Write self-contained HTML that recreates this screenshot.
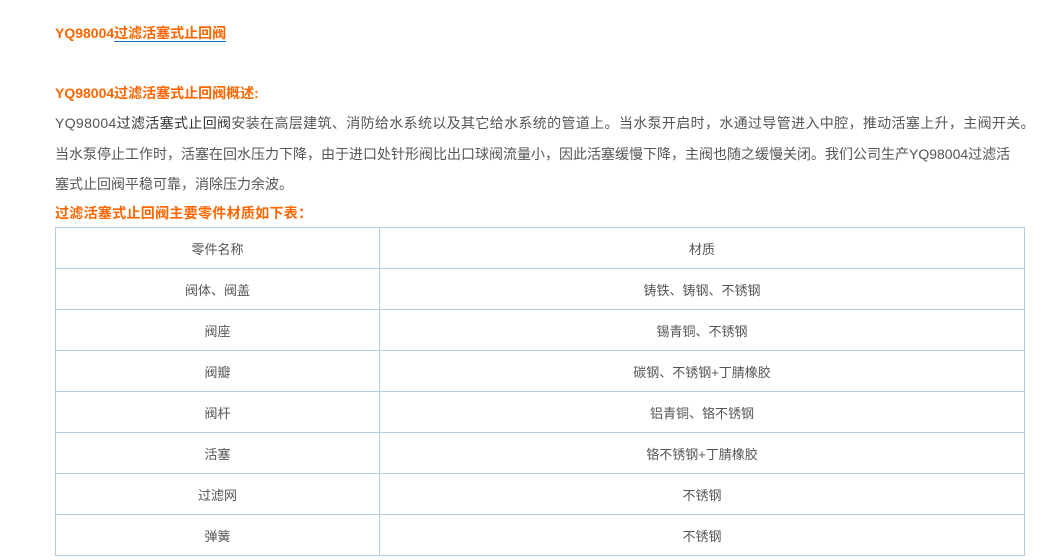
<!DOCTYPE html>
<html><head><meta charset="utf-8"><style>
body{margin:0;background:#fff;width:1042px;height:560px;overflow:hidden;font-family:"Liberation Sans","Noto Sans CJK SC",sans-serif;font-size:14px;color:#555;}
.t{position:absolute;left:55px;white-space:nowrap;}
.o{color:#ff6600;font-weight:bold;}
a{color:#ff6600;text-decoration:none;border-bottom:1px solid #1a6fc0;}
table{position:absolute;left:55px;top:227px;width:970px;border-collapse:collapse;}
td{border:1px solid #b5cde0;height:40px;text-align:center;font-size:13px;color:#555;padding:0;}
</style></head><body>
<div class="t o" style="top:23px">YQ98004<a>过滤活塞式止回阀</a></div>
<div class="t o" style="top:83px">YQ98004过滤活塞式止回阀概述:</div>
<div class="t" style="top:113px;letter-spacing:0.35px">YQ98004<span style="color:#333">过滤活塞式止回阀</span>安装在高层建筑、消防给水系统以及其它给水系统的管道上。当水泵开启时，水通过导管进入中腔，推动活塞上升，主阀开关。</div>
<div class="t" style="top:144px">当水泵停止工作时，活塞在回水压力下降，由于进口处针形阀比出口球阀流量小，因此活塞缓慢下降，主阀也随之缓慢关闭。我们公司生产YQ98004过滤活</div>
<div class="t" style="top:174px">塞式止回阀平稳可靠，消除压力余波。</div>
<div class="t o" style="top:203px;letter-spacing:0.3px">过滤活塞式止回阀主要零件材质如下表：</div>
<table>
<tr><td style="width:323px">零件名称</td><td>材质</td></tr>
<tr><td>阀体、阀盖</td><td>铸铁、铸钢、不锈钢</td></tr>
<tr><td>阀座</td><td>锡青铜、不锈钢</td></tr>
<tr><td>阀瓣</td><td>碳钢、不锈钢+丁腈橡胶</td></tr>
<tr><td>阀杆</td><td>铝青铜、铬不锈钢</td></tr>
<tr><td>活塞</td><td>铬不锈钢+丁腈橡胶</td></tr>
<tr><td>过滤网</td><td>不锈钢</td></tr>
<tr><td>弹簧</td><td>不锈钢</td></tr>
</table>
</body></html>
